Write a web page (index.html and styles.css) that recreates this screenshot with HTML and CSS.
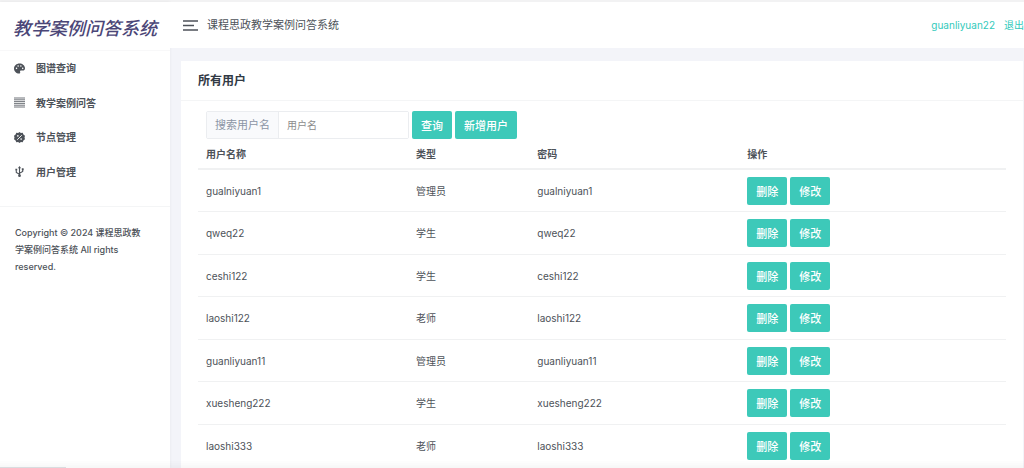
FILE: index.html
```
<!DOCTYPE html>
<html lang="zh-CN">
<head>
<meta charset="utf-8">
<title>课程思政教学案例问答系统</title>
<link rel="stylesheet" href="styles.css">
</head>
<body>
<div class="app">
  <aside class="sidebar">
    <div class="logo">教学案例问答系统</div>
    <nav class="menu">
      <a class="menu-item" href="#"><svg class="icon" viewBox="0 0 24 24"><path fill="currentColor" fill-rule="evenodd" d="M12 1C5.500 1 0 6 0 12s5 11 11 11c2.500 0 3-2 2.300-3.500-.6-1.800.4-3 2.200-3H19c3 0 5-2 5-5C24 5.500 18.500 1 12 1zM5.500 10a1.700 1.700 0 1 0 0 3.400 1.700 1.700 0 0 0 0-3.400zM9 5a1.700 1.700 0 1 0 0 3.400A1.700 1.700 0 0 0 9 5zM15 5a1.700 1.700 0 1 0 0 3.400A1.700 1.700 0 0 0 15 5zM19 10a1.700 1.700 0 1 0 0 3.400 1.700 1.700 0 0 0 0-3.400z"/></svg>图谱查询</a>
      <a class="menu-item" href="#"><svg class="icon" viewBox="0 0 11 11"><path stroke="currentColor" stroke-width=".8" d="M0 1h11M0 2.800h11M0 4.600h11M0 6.400h11M0 8.200h11M0 10h11"/></svg>教学案例问答</a>
      <a class="menu-item" href="#"><svg class="icon" viewBox="0 0 24 24"><path fill="currentColor" d="M12 0l3 2 4-.5 1.500 4L24 8l-1 4 1 4-3.500 2.500-1.500 4-4-.5-3 2-3-2-4 .5-1.500-4L0 16l1-4-1-4 3.500-2.500 1.500-4L9 2z"/><path stroke="#fff" stroke-width="2" d="M7 17L17 7"/><circle cx="8.500" cy="8.500" r="1.800" fill="#fff"/><circle cx="15.500" cy="15.500" r="1.800" fill="#fff"/></svg>节点管理</a>
      <a class="menu-item" href="#"><svg class="icon" viewBox="0 0 24 24"><path fill="none" stroke="currentColor" stroke-width="2.400" d="M12 3v17M12 18l-7-4V9M12 16l7-4V7"/><path fill="currentColor" d="M12 0l3.500 5h-7zM3 6h4v4H3zM17 5h4v4h-4z"/><circle cx="12" cy="21" r="3" fill="currentColor"/></svg>用户管理</a>
    </nav>
    <p class="copyright">Copyright © 2024 课程思政教学案例问答系统 All rights reserved.</p>
  </aside>
  <div class="main">
    <header class="topbar">
      <button class="toggle" type="button" aria-label="菜单"><svg class="bars" viewBox="0 0 15 11"><path stroke="currentColor" stroke-width="1.400" d="M0 1h15M0 5.500h11M0 10h15"/></svg></button>
      <span class="system-name">课程思政教学案例问答系统</span>
      <a class="user-link" href="#">guanliyuan22</a>
      <a class="user-link" href="#">退出</a>
    </header>
    <main class="content">
      <section class="card">
        <h1 class="card-title">所有用户</h1>
        <div class="card-body">
          <form class="search">
            <div class="field"><label class="field-label" for="username">搜索用户名</label><input class="field-input" id="username" type="text" placeholder="用户名"></div>
            <button class="btn" type="button">查询</button>
            <button class="btn" type="button">新增用户</button>
          </form>
          <table class="users">
            <thead><tr><th class="col-name">用户名称</th><th class="col-type">类型</th><th class="col-name">密码</th><th>操作</th></tr></thead>
            <tbody>
              <tr><td>gualniyuan1</td><td>管理员</td><td>gualniyuan1</td><td><div class="actions"><button class="btn" type="button">删除</button><button class="btn" type="button">修改</button></div></td></tr>
              <tr><td>qweq22</td><td>学生</td><td>qweq22</td><td><div class="actions"><button class="btn" type="button">删除</button><button class="btn" type="button">修改</button></div></td></tr>
              <tr><td>ceshi122</td><td>学生</td><td>ceshi122</td><td><div class="actions"><button class="btn" type="button">删除</button><button class="btn" type="button">修改</button></div></td></tr>
              <tr><td>laoshi122</td><td>老师</td><td>laoshi122</td><td><div class="actions"><button class="btn" type="button">删除</button><button class="btn" type="button">修改</button></div></td></tr>
              <tr><td>guanliyuan11</td><td>管理员</td><td>guanliyuan11</td><td><div class="actions"><button class="btn" type="button">删除</button><button class="btn" type="button">修改</button></div></td></tr>
              <tr><td>xuesheng222</td><td>学生</td><td>xuesheng222</td><td><div class="actions"><button class="btn" type="button">删除</button><button class="btn" type="button">修改</button></div></td></tr>
              <tr><td>laoshi333</td><td>老师</td><td>laoshi333</td><td><div class="actions"><button class="btn" type="button">删除</button><button class="btn" type="button">修改</button></div></td></tr>
            </tbody>
          </table>
        </div>
      </section>
    </main>
  </div>
</div>
<div class="edge-shade"></div>
<div class="status-line"></div>
</body>
</html>
```
FILE: styles.css
```
* { box-sizing: border-box; }
body {
  margin: 0;
  background: #f3f4f9;
  color: #4d5259;
  font: 10px/16px Inter, "Noto Sans CJK SC", sans-serif;
}
button, input { font-family: inherit; }
a { text-decoration: none; }
.app {
  display: flex;
  min-height: 100vh;
  border-top: 2px solid #f2f2f3;
}
.sidebar {
  flex: 0 0 170px;
  background: #fff;
  box-shadow: 0 0 3px rgba(0, 0, 0, .06);
}
.logo {
  height: 49px;
  border-bottom: 1px solid #f8f8f9;
  color: #4b4677;
  font-family: KaiTi, STKaiti, "Noto Sans CJK SC", sans-serif;
  font-size: 18px;
  font-style: italic;
  font-weight: 500;
  line-height: 50px;
  text-align: center;
}
.menu {
  padding-bottom: 17px;
  border-bottom: 1px solid #f4f5f6;
}
.menu-item {
  display: flex;
  align-items: center;
  gap: 11px;
  height: 34px;
  padding-left: 14px;
  color: #4d5259;
  font-weight: 600;
}
.menu-item:nth-child(even) { height: 35px; }
.icon { width: 11px; height: 11px; }
.copyright {
  margin: 17px 22px 17px 15px;
  font-size: 9px;
  font-weight: 500;
  line-height: 17px;
}
.main {
  flex: 1;
  min-width: 0;
  display: flex;
  flex-direction: column;
}
.topbar {
  display: flex;
  align-items: center;
  gap: 9px;
  height: 46px;
  padding-left: 13px;
  background: #fff;
}
.toggle {
  display: flex;
  padding: 0;
  border: 0;
  background: none;
  color: #4d5259;
}
.bars { width: 15px; height: 11px; }
.system-name { flex: 1; font-size: 11px; }
.user-link { color: #33cabb; }
.content {
  flex: 1;
  display: flex;
  padding: 13px 1px 0 11px;
}
.card { flex: 1; background: #fff; }
.card-title {
  margin: 0;
  padding: 0 17px;
  border-bottom: 1px solid #f4f5f6;
  color: #313944;
  font-size: 12px;
  font-weight: 600;
  line-height: 39px;
}
.card-body { padding: 10px 17px 0; }
.search {
  display: flex;
  gap: 3px;
  padding-left: 8px;
}
.field {
  display: flex;
  width: 203px;
  height: 28px;
  border: 1px solid #ebedf0;
  border-radius: 2px;
}
.field-label {
  padding: 0 8px;
  border-right: 1px solid #ebedf0;
  background: #f9fafc;
  color: #8b95a5;
  font-size: 11px;
  line-height: 26px;
}
.field-input {
  flex: 1;
  min-width: 0;
  padding: 0 8px;
  border: 0;
  background: #fff;
  color: #4d5259;
  font-size: 10px;
}
.field-input::placeholder { color: #8c8c8c; }
.btn {
  height: 28px;
  padding: 0 9px;
  border: 0;
  border-radius: 2px;
  background: #3dc9b9;
  color: #fff;
  font-size: 11px;
  font-weight: 500;
}
.users {
  width: 100%;
  border-collapse: separate;
  border-spacing: 0;
  table-layout: fixed;
}
.users th, .users td { padding: 0 8px; text-align: left; }
.users th {
  height: 31px;
  border-bottom: 2px solid #f0f1f2;
  font-weight: 600;
}
.users td { height: 42px; border-bottom: 1px solid #f0f1f2; }
.users tr:nth-child(even) td { height: 43px; }
.users tbody tr:last-child td { border-bottom: 0; }
.col-name { width: 26%; }
.col-type { width: 15%; }
.actions { display: flex; gap: 3px; }
.edge-shade {
  position: fixed;
  right: 0;
  bottom: 0;
  left: 0;
  height: 8px;
  background: linear-gradient(transparent, rgba(0, 0, 0, .03));
  pointer-events: none;
}
.status-line {
  position: fixed;
  bottom: 0;
  left: 0;
  width: 66px;
  height: 1px;
  background: #d9dcdf;
}
```
